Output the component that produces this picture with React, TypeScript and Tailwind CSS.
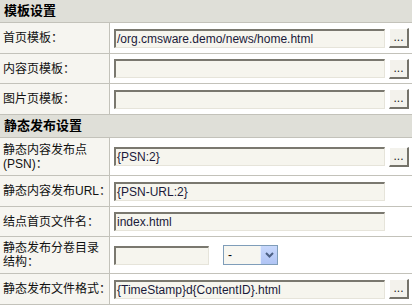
import React from "react";

const font = { fontFamily: '"Liberation Sans", "Noto Sans CJK SC", sans-serif' };

function TextInput({ value = "", width = "w-[271px]" }: { value?: string; width?: string }) {
  return (
    <div
      className={`${width} h-[19px] bg-[#f6f5ee] border-t-2 border-l-2 border-t-[#7a786f] border-l-[#7a786f] border-r border-b border-r-[#e6e4da] border-b-[#e6e4da] flex items-center pl-[1px] text-[12px] text-[#1a1a3a] whitespace-nowrap overflow-hidden`}
    >
      {value}
    </div>
  );
}

function DotButton() {
  return (
    <div className="w-[20px] h-[20px] bg-[#f3f2ec] border-t border-l border-t-white border-l-white border-r-2 border-b-2 border-r-[#75736a] border-b-[#75736a] flex items-end justify-center pb-[3px] text-[12px] leading-none text-[#222]">
      ...
    </div>
  );
}

function Header({ title }: { title: string }) {
  return (
    <div className="h-[23px] bg-[#dfdfd8] border-b border-[#c3c2ba] flex items-center pl-[4px] text-[13px] font-bold text-black">
      {title}
    </div>
  );
}

function Row({
  label,
  h,
  children,
}: {
  label: React.ReactNode;
  h: string;
  children: React.ReactNode;
}) {
  return (
    <div className={`flex ${h} border-b border-[#c3c2ba]`}>
      <div className="w-[110px] shrink-0 bg-[#f6f5f0] border-r border-[#c3c2ba] flex items-center pl-[3px] text-[12px] leading-[14px] text-[#111] whitespace-nowrap">
        {label}
      </div>
      <div className="flex-1 bg-white flex items-center pl-[4px] gap-[4px]">{children}</div>
    </div>
  );
}

export default function App() {
  return (
    <div className="w-[412px] h-[306px] bg-white overflow-hidden" style={font}>
      <Header title="模板设置" />
      <Row label="首页模板：" h="h-[31px]">
        <TextInput value="/org.cmsware.demo/news/home.html" />
        <DotButton />
      </Row>
      <Row label="内容页模板：" h="h-[30px]">
        <TextInput />
        <DotButton />
      </Row>
      <Row label="图片页模板：" h="h-[31px]">
        <TextInput />
        <DotButton />
      </Row>
      <Header title="静态发布设置" />
      <Row
        label={
          <span>
            静态内容发布点
            <br />
            (PSN)：
          </span>
        }
        h="h-[38px]"
      >
        <TextInput value="{PSN:2}" />
        <DotButton />
      </Row>
      <Row label="静态内容发布URL：" h="h-[31px]">
        <TextInput value="{PSN-URL:2}" />
      </Row>
      <Row label="结点首页文件名：" h="h-[30px]">
        <TextInput value="index.html" />
      </Row>
      <Row
        label={
          <span>
            静态发布分卷目录
            <br />
            结构：
          </span>
        }
        h="h-[37px]"
      >
        <TextInput width="w-[95px]" />
        <div className="ml-[10px] w-[55px] h-[20px] border border-[#7f9db9] bg-[#f7f6f0] flex">
          <div className="flex-1 flex items-center pl-[4px] text-[12px]">-</div>
          <div className="w-[17px] h-full bg-gradient-to-b from-[#c8d8fc] to-[#b0c4f4] border-l border-[#e6eefc] flex items-center justify-center">
            <svg width="9" height="6" viewBox="0 0 9 6">
              <path d="M1 1 L4.5 4.5 L8 1" stroke="#4d6185" strokeWidth="2" fill="none" />
            </svg>
          </div>
        </div>
      </Row>
      <Row label="静态发布文件格式：" h="h-[31px]">
        <TextInput value="{TimeStamp}d{ContentID}.html" />
        <DotButton />
      </Row>
    </div>
  );
}
